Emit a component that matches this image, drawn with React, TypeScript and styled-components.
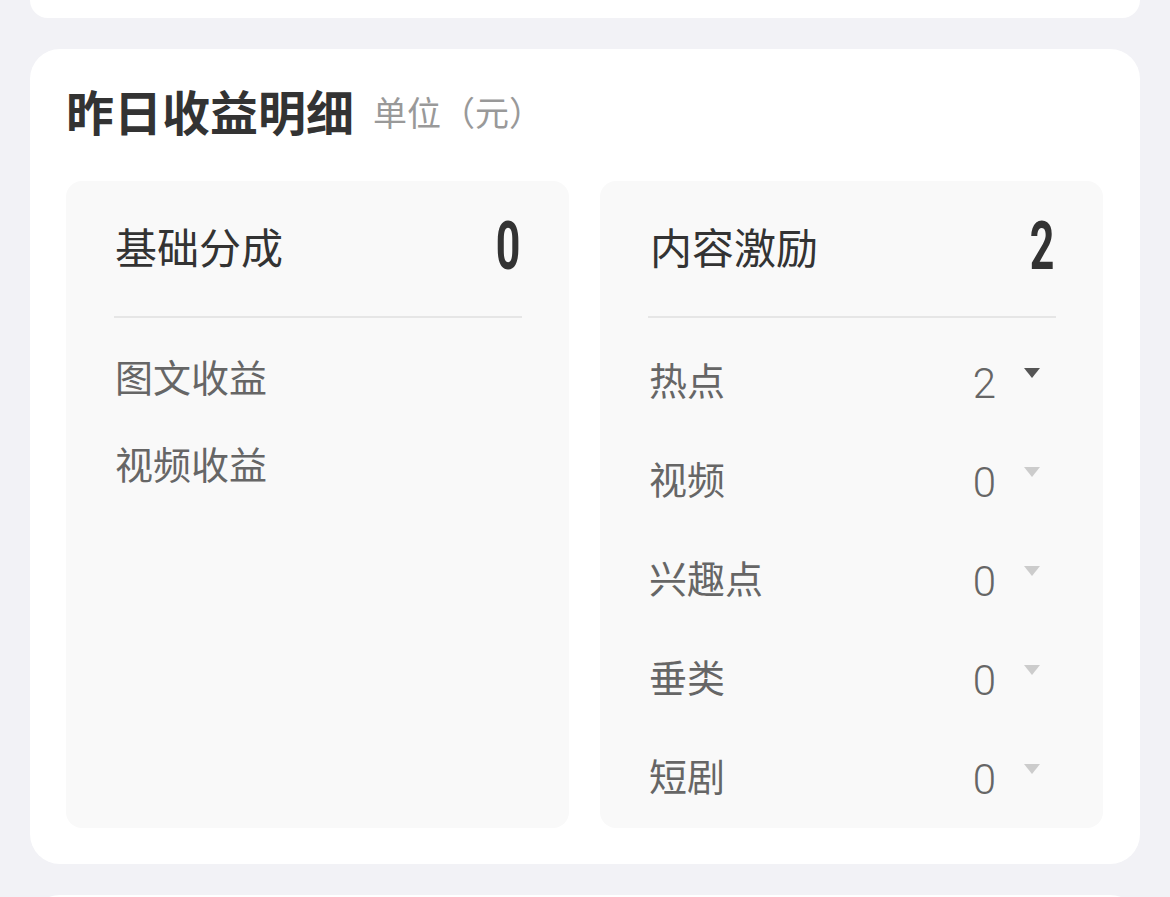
import React from "react";
import styled, { createGlobalStyle } from "styled-components";

const Global = createGlobalStyle`
  html, body { margin: 0; padding: 0; background: #f2f2f6; }
  body { font-family: "Noto Sans CJK SC", "Noto Sans", sans-serif; }
  * { box-sizing: border-box; }
`;

const Page = styled.div`
  padding: 0 30px;
  display: flex;
  flex-direction: column;
  gap: 31px;
  height: 897px;
  overflow: hidden;
`;

const StubTop = styled.div`
  height: 18px;
  background: #fff;
  border-radius: 0 0 30px 30px;
  flex-shrink: 0;
`;

const StubBottom = styled.div`
  height: 60px;
  background: #fff;
  border-radius: 30px 30px 0 0;
  flex-shrink: 0;
`;

const Card = styled.section`
  background: #fff;
  border-radius: 30px;
  padding: 28px 37px 36px 36px;
  flex-shrink: 0;
`;

const TitleRow = styled.div`
  display: flex;
  align-items: center;
  height: 67px;
  margin-bottom: 37px;
`;

const Title = styled.h2`
  margin: 0;
  font-size: 48px;
  line-height: 67px;
  font-weight: 700;
  color: #333;
`;

const Unit = styled.span`
  margin-left: 19px;
  font-size: 34px;
  color: #999;
  line-height: 1;
  margin-top: 2px;
`;

const Panels = styled.div`
  display: grid;
  grid-template-columns: 503px 503px;
  gap: 31px;
`;

const Panel = styled.div`
  background: #f9f9f9;
  border-radius: 16px;
  height: 647px;
  display: flex;
  flex-direction: column;
`;

const PanelHead = styled.div<{ $pad: number }>`
  height: 135px;
  display: flex;
  align-items: center;
  justify-content: space-between;
  padding: 0 49px 0 ${(p) => p.$pad}px;
`;

const HeadLabel = styled.span`
  font-size: 42px;
  color: #333;
  line-height: 1;
  margin-top: -6px;
`;

const BigNum = styled.span`
  display: inline-block;
  font-family: Roboto, "Liberation Sans", sans-serif;
  font-weight: 700;
  font-size: 67px;
  line-height: 1;
  color: #333;
  transform: scaleX(0.64);
  transform-origin: right center;
  margin-top: -4px;
`;

const Divider = styled.div`
  height: 2px;
  background: #e6e6e6;
  margin: 0 47px 0 48px;
`;

const List = styled.div<{ $top: number }>`
  display: flex;
  flex-direction: column;
  padding-top: ${(p) => p.$top}px;
`;

const Row = styled.div<{ $h: number }>`
  height: ${(p) => p.$h}px;
  display: flex;
  align-items: center;
  justify-content: space-between;
  padding: 0 63px 0 49px;
`;

const RowLabel = styled.span`
  font-size: 38px;
  color: #666;
  line-height: 1;
  margin-top: -5px;
`;

const ValueGroup = styled.div`
  display: flex;
  align-items: center;
  gap: 28px;
`;

const RowValue = styled.span`
  font-family: Roboto, "Liberation Sans", sans-serif;
  font-weight: 300;
  font-size: 42px;
  color: #666;
  line-height: 1;
  margin-top: 4px;
`;

const Caret = styled.span<{ $active: boolean }>`
  width: 0;
  height: 0;
  border-left: 8.5px solid transparent;
  border-right: 8.5px solid transparent;
  border-top: 10px solid ${(p) => (p.$active ? "#555" : "#ccc")};
  margin-bottom: 18px;
`;

const incentives = [
  { label: "热点", value: 2, active: true },
  { label: "视频", value: 0, active: false },
  { label: "兴趣点", value: 0, active: false },
  { label: "垂类", value: 0, active: false },
  { label: "短剧", value: 0, active: false },
];

export default function App() {
  return (
    <>
      <Global />
      <Page>
        <StubTop />
        <Card>
          <TitleRow>
            <Title>昨日收益明细</Title>
            <Unit>单位（元）</Unit>
          </TitleRow>
          <Panels>
            <Panel>
              <PanelHead $pad={49}>
                <HeadLabel>基础分成</HeadLabel>
                <BigNum>0</BigNum>
              </PanelHead>
              <Divider />
              <List $top={17}>
                <Row $h={87}>
                  <RowLabel>图文收益</RowLabel>
                </Row>
                <Row $h={87}>
                  <RowLabel>视频收益</RowLabel>
                </Row>
              </List>
            </Panel>
            <Panel>
              <PanelHead $pad={50}>
                <HeadLabel>内容激励</HeadLabel>
                <BigNum>2</BigNum>
              </PanelHead>
              <Divider />
              <List $top={14}>
                {incentives.map((it) => (
                  <Row $h={99} key={it.label}>
                    <RowLabel>{it.label}</RowLabel>
                    <ValueGroup>
                      <RowValue>{it.value}</RowValue>
                      <Caret $active={it.active} />
                    </ValueGroup>
                  </Row>
                ))}
              </List>
            </Panel>
          </Panels>
        </Card>
        <StubBottom />
      </Page>
    </>
  );
}
